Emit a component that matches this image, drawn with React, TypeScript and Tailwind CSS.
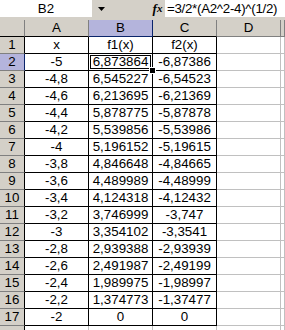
import React from "react";

const rows: [string, string, string][] = [
  ["x", "f1(x)", "f2(x)"],
  ["-5", "6,873864", "-6,87386"],
  ["-4,8", "6,545227", "-6,54523"],
  ["-4,6", "6,213695", "-6,21369"],
  ["-4,4", "5,878775", "-5,87878"],
  ["-4,2", "5,539856", "-5,53986"],
  ["-4", "5,196152", "-5,19615"],
  ["-3,8", "4,846648", "-4,84665"],
  ["-3,6", "4,489989", "-4,48999"],
  ["-3,4", "4,124318", "-4,12432"],
  ["-3,2", "3,746999", "-3,747"],
  ["-3", "3,354102", "-3,3541"],
  ["-2,8", "2,939388", "-2,93939"],
  ["-2,6", "2,491987", "-2,49199"],
  ["-2,4", "1,989975", "-1,98997"],
  ["-2,2", "1,374773", "-1,37477"],
  ["-2", "0", "0"],
];

const cell = "h-[17px] flex items-center justify-center shrink-0 border-r border-b";

const App = () => {
  return (
    <div className="w-[285px] h-[330px] overflow-hidden bg-[#d4d0c8] font-['Liberation_Sans',Arial,sans-serif] text-[13.33px] text-black leading-none">
      {/* barra de fórmulas */}
      <div className="flex h-[17px]">
        <div className="w-[92px] bg-white flex items-center justify-center">B2</div>
        <div className="w-[18px] flex items-center justify-center">
          <svg width="7" height="4" viewBox="0 0 7 4">
            <path d="M0 0h7L3.5 4z" fill="#000" />
          </svg>
        </div>
        <div className="w-[40px]" />
        <div className="w-[15px] flex items-center justify-center font-['Liberation_Serif',serif] italic font-bold text-[13px]">
          f<span className="text-[11px]">x</span>
        </div>
        <div className="flex-1 bg-white flex items-center pl-[2px] tracking-[-0.3px]">=3/2*(A2^2-4)^(1/2)</div>
      </div>
      <div className="h-[3px]" />

      {/* cabeçalho das colunas */}
      <div className="flex">
        <div className={`${cell} w-[25px] border-[#808080] border-b-black`} />
        <div className={`${cell} w-[64px] border-[#808080] border-b-black`}>A</div>
        <div className={`${cell} w-[64px] bg-[#b4b4dc] border-r-[#0a246a] border-b-[#0a246a]`}>B</div>
        <div className={`${cell} w-[64px] border-[#808080] border-b-black`}>C</div>
        <div className={`${cell} w-[64px] border-[#808080]`}>D</div>
        <div className={`${cell} flex-1 border-[#808080]`} />
      </div>

      {/* linhas */}
      {rows.map((r, i) => {
        const sel = i === 1;
        return (
          <div key={i} className="flex">
            <div
              className={`${cell} w-[25px] border-b-[#808080] ${
                sel ? "bg-[#b4b4dc] border-r-[#0a246a]" : "border-r-black"
              }`}
            >
              {i + 1}
            </div>
            <div className={`${cell} w-[64px] bg-white border-black`}>{r[0]}</div>
            <div className={`${cell} w-[64px] bg-white border-black relative`}>
              {sel && (
                <>
                  <div className="absolute inset-[1px] border border-black" />
                  <div className="absolute right-[-3px] bottom-[-3px] w-[5px] h-[5px] bg-black outline outline-1 outline-white z-10" />
                </>
              )}
              <span className="relative">{r[1]}</span>
            </div>
            <div className={`${cell} w-[64px] bg-white border-black`}>{r[2]}</div>
            <div className={`${cell} w-[64px] bg-white border-[#c0c0c0]`} />
            <div className={`${cell} flex-1 bg-white border-[#c0c0c0]`} />
          </div>
        );
      })}
      <div className="flex">
        <div className={`${cell} w-[25px] border-[#808080] border-r-black`} />
        <div className={`${cell} w-[64px] bg-white border-[#c0c0c0]`} />
        <div className={`${cell} w-[64px] bg-white border-[#c0c0c0]`} />
        <div className={`${cell} w-[64px] bg-white border-[#c0c0c0]`} />
        <div className={`${cell} w-[64px] bg-white border-[#c0c0c0]`} />
        <div className={`${cell} flex-1 bg-white border-[#c0c0c0]`} />
      </div>
    </div>
  );
};

export default App;
